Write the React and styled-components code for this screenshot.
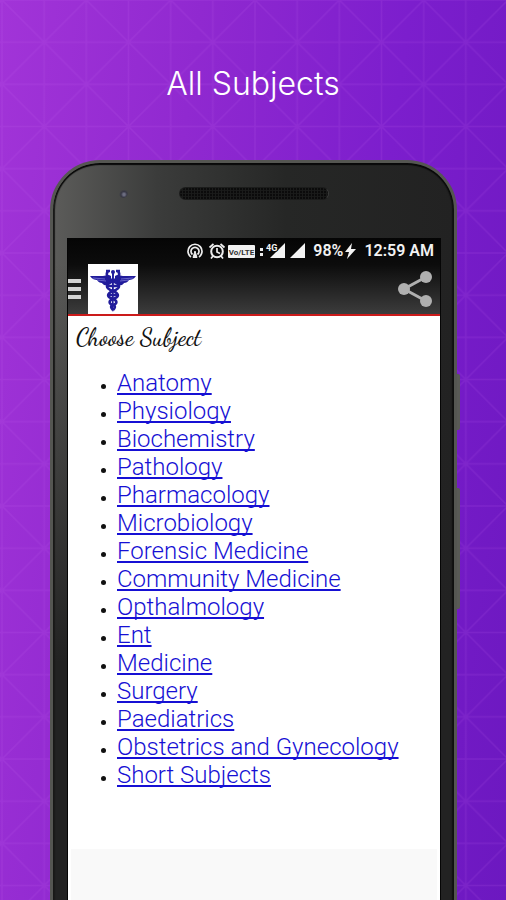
import React from "react";
import styled, { createGlobalStyle } from "styled-components";

const Global = createGlobalStyle`
  * { box-sizing: border-box; }
  body { margin: 0; background: #8a26cc; font-family: Roboto, "Noto Sans", sans-serif; }
`;

const Stage = styled.main`
  position: relative;
  display: flex;
  flex-direction: column;
  min-height: 100vh;
  overflow: hidden;
  background: linear-gradient(98deg, #a234d8 0%, #9029d0 32%, #7c1ecd 65%, #6c18c0 100%);
`;

const Backdrop = styled.svg`
  position: absolute;
  inset: 0;
  width: 100%;
  height: 100%;
`;

const Title = styled.h1`
  position: relative;
  margin: 0;
  padding: 64px 16px 0;
  height: 160px;
  color: #fff;
  font: 300 32px/40px "Inter", "Liberation Sans", sans-serif;
  text-align: center;
`;

const Phone = styled.section`
  position: relative;
  flex: 1;
  display: flex;
  flex-direction: column;
  margin: 0 49px 0 50px;
  padding: 0 13px 0 14px;
  border: solid #555652;
  border-width: 3px 3px 0;
  border-radius: 50px 50px 0 0;
  background:
    linear-gradient(rgba(34, 34, 34, 0) 100px, #222 500px),
    linear-gradient(90deg, #5c5c5a 0, #3b3c3b 26%, #262726 58%, #222 100%);
  box-shadow: inset 0 2px 1px #080808, inset 2px 0 1px #1b1b1a, inset -2px 0 1px #111;
`;

const SideKey = styled.span`
  position: absolute;
  right: -6px;
  top: ${(p) => p.$top}px;
  width: 3px;
  height: ${(p) => p.$length}px;
  border-radius: 0 2px 2px 0;
  background: #595a56;
`;

const Bezel = styled.div`
  display: grid;
  grid-template-columns: 1fr 150px 1fr;
  align-items: center;
  height: 75px;
  padding-bottom: 15px;
`;

const Camera = styled.span`
  justify-self: center;
  width: 10px;
  height: 10px;
  border-radius: 50%;
  background: radial-gradient(circle at 60% 65%, #6c6d80 0 1px, #373744 3px, #494a4c00 5px);
`;

const Speaker = styled.span`
  height: 13px;
  border: 1px solid #1b1c1b;
  border-right-color: #3a3b3a;
  border-radius: 7px;
  background:
    repeating-linear-gradient(90deg, transparent 0 2px, #1a1b1a 2px 3px),
    repeating-linear-gradient(0deg, #0b0b0b 0 2px, #181918 2px 3px);
`;

const Screen = styled.div`
  flex: 1;
  display: flex;
  flex-direction: column;
  border: solid #050505;
  border-width: 0 1px;
  background: #fff;
`;

const Header = styled.header`
  border-bottom: 2px solid #cb1a1a;
  background: linear-gradient(#050505 0%, #0c0c0c 35%, #3c3c3c 100%);
`;

const StatusBar = styled.div`
  display: flex;
  align-items: center;
  justify-content: flex-end;
  height: 26px;
  padding-right: 6px;
  color: #f2f2f2;
  font: 600 16px/24px Roboto, sans-serif;
  white-space: nowrap;
`;

const Battery = styled.span`
  margin-left: 7px;
`;

const Clock = styled.time`
  margin-left: 7px;
`;

const Toolbar = styled.div`
  display: flex;
  align-items: stretch;
  height: 50px;
`;

const IconButton = styled.button`
  display: flex;
  align-items: center;
  padding: 0;
  border: 0;
  background: none;
  cursor: pointer;
`;

const ShareButton = styled(IconButton)`
  margin-left: auto;
  padding-right: 7px;
`;

const Logo = styled.svg`
  width: 50px;
  height: 50px;
  margin-left: 6px;
  background: #fff;
`;

const Content = styled.div`
  flex: 1;
  padding: 7px 8px 60px;
`;

const Heading = styled.h2`
  margin: 0;
  color: #111;
  font: 500 24px/30px "Dancing Script", cursive;
`;

const SubjectList = styled.ul`
  margin: 16px 0 0;
  padding: 0 0 0 41px;
  color: #111;
`;

const Subject = styled.li`
  font: 350 24px/28px Roboto, sans-serif;
  &::marker { font-size: 15px; }
`;

const SubjectLink = styled.a`
  color: #1610d4;
  text-decoration: underline;
  text-decoration-thickness: 2px;
  text-underline-offset: 2px;
  text-decoration-skip-ink: none;
`;

const Footer = styled.footer`
  height: 52px;
  margin: 0 3px;
  background: #f9f9f9;
`;

const subjects = [
  "Anatomy", "Physiology", "Biochemistry", "Pathology", "Pharmacology",
  "Microbiology", "Forensic Medicine", "Community Medicine", "Opthalmology",
  "Ent", "Medicine", "Surgery", "Paediatrics", "Obstetrics and Gynecology",
  "Short Subjects",
];

function GridPattern() {
  return (
    <Backdrop aria-hidden="true">
      <defs>
        <pattern id="tri" width="84" height="84" patternUnits="userSpaceOnUse" patternTransform="translate(2 0) scale(1.004)">
          <path d="M0 0V84M84 0V84M42 0V84M0 0H84M0 84H84M0 42H84M0 0L84 84M84 0L0 84" fill="none" stroke="#c66cf0" strokeOpacity=".13" strokeWidth="1.5" />
        </pattern>
      </defs>
      <rect width="100%" height="100%" fill="url(#tri)" />
    </Backdrop>
  );
}

function StatusIcons() {
  return (
    <svg width="119" height="18" viewBox="0 0 119 18" fill="none" stroke="#eee" aria-hidden="true">
      <path d="M4 15a7 7 0 1 1 8 0M5.500 12.500a4 4 0 1 1 5 0" strokeWidth="1.700" />
      <path d="M8 9L6 15.500h4Z" fill="#eee" strokeWidth="1" />
      <circle cx="30" cy="9.500" r="5.800" strokeWidth="2" />
      <path d="M30 6v4l3 1.500M22.500 5.500L26.500 2M37.500 5.500L33.500 2M26 14l-2 2.500M34 14l2 2.500" strokeWidth="1.700" />
      <rect x="41" y="3" width="27" height="13" rx="1" fill="#f2f2f2" stroke="none" />
      <text x="54.500" y="12.500" textAnchor="middle" fill="#333" stroke="none" fontFamily="Roboto" fontWeight="700" fontSize="8">Vo/LTE</text>
      <path d="M73 6h3v3h-3zM73 11h3v3h-3z" fill="#eee" stroke="none" />
      <path d="M98 1v15H83ZM118 1v15H103Z" fill="#f4f4f4" stroke="none" />
      <text x="79" y="8.500" fill="#f4f4f4" stroke="#080808" strokeWidth="2" paintOrder="stroke" fontFamily="Roboto" fontWeight="700" fontSize="9">4G</text>
    </svg>
  );
}

function Caduceus() {
  return (
    <Logo viewBox="0 0 50 50" role="img" aria-label="Medical caduceus">
      <g fill="#211c9b">
        <path d="M23 12C20 10 18 12 15 12H2c2 3 5 4 7 4 1 2 3 3 5 3 1 2 4 3 6 2l3-4ZM27 12c3-2 5 0 8 0h13c-2 3-5 4-7 4-1 2-3 3-5 3-1 2-4 3-6 2l-3-4Z" />
        <circle cx="25" cy="8" r="2" />
        <path d="M24 9h2l-.5 37L25 48l-1-2Z" />
      </g>
      <g fill="none" stroke="#211c9b" strokeWidth="2.600">
        <path d="M20 7c-3 4 0 7 5 10 8 4 8 7 0 10-7 3-6 6 0 8 5 2 4 5 0 6-3 1-2 3 0 5" />
        <path d="M30 7c3 4 0 7-5 10-8 4-8 7 0 10 7 3 6 6 0 8-5 2-4 5 0 6 3 1 2 3 0 5" />
        <path d="M18 7h4M28 7h4M19 22h12M20 31h10" />
      </g>
      <path d="M5 14l12 1M9 16l9 1M45 14l-12 1M41 16l-9 1" stroke="#8784dc" strokeWidth=".7" />
    </Logo>
  );
}

export default function App() {
  return (
    <Stage>
      <Global />
      <GridPattern />
      <Title>All Subjects</Title>
      <Phone>
        <SideKey $top={211} $length={56} />
        <SideKey $top={325} $length={121} />
        <Bezel>
          <Camera />
          <Speaker />
        </Bezel>
        <Screen>
          <Header>
            <StatusBar>
              <StatusIcons />
              <Battery>98%</Battery>
              <svg width="14" height="16" viewBox="0 0 14 16" aria-hidden="true"><path d="M9 0L2 9h4l-2 7 9-10H8Z" fill="#f4f4f4" /></svg>
              <Clock>12:59 AM</Clock>
            </StatusBar>
            <Toolbar>
              <IconButton aria-label="Menu">
                <svg width="14" height="22" viewBox="0 0 14 22"><path d="M0 3h13M0 11h13M0 19h13" stroke="#d4d4d4" strokeWidth="4" /></svg>
              </IconButton>
              <Caduceus />
              <ShareButton aria-label="Share">
                <svg width="36" height="38" viewBox="0 0 36 38" fill="#b0b0b0"><path d="M29 7L7 19l22 12" fill="none" stroke="#b0b0b0" strokeWidth="3" /><circle cx="29" cy="7" r="6" /><circle cx="7" cy="19" r="6" /><circle cx="29" cy="31" r="6" /></svg>
              </ShareButton>
            </Toolbar>
          </Header>
          <Content>
            <Heading>Choose Subject</Heading>
            <SubjectList>
              {subjects.map((name) => (
                <Subject key={name}><SubjectLink href="#">{name}</SubjectLink></Subject>
              ))}
            </SubjectList>
          </Content>
          <Footer />
        </Screen>
      </Phone>
    </Stage>
  );
}
